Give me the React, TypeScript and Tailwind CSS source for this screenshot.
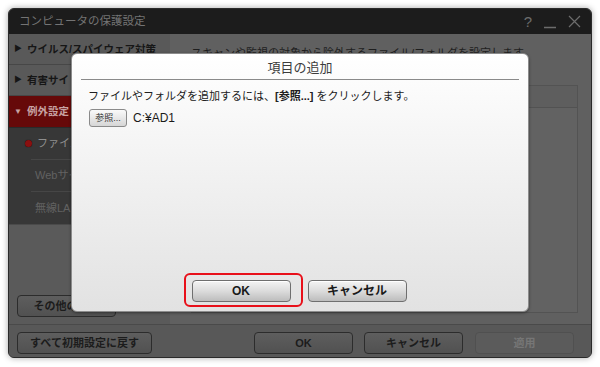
import { ReactNode } from "react";

const FONT = "font-['Liberation_Sans','Noto_Sans_CJK_JP',sans-serif]";

function DarkButton({ children, className = "", disabled = false }: { children: ReactNode; className?: string; disabled?: boolean }) {
  return (
    <div
      className={`h-[22px] flex items-center justify-center rounded-[4px] border text-[11px] font-bold leading-none ${
        disabled
          ? "border-[#505050] bg-[#5b5b5b] text-[#767676]"
          : "border-[#2c2c2c] bg-linear-to-b from-[#5e5e5e] to-[#515151] text-[#1c1c1c]"
      } ${className}`}
    >
      {children}
    </div>
  );
}

function LightButton({ children }: { children: ReactNode }) {
  return (
    <div className="w-[99px] h-[22px] flex items-center justify-center rounded-[4px] border border-[#6f6f6f] bg-linear-to-b from-[#f4f4f4] via-[#dcdcdc] to-[#bdbdbd] text-[12px] font-bold leading-none text-[#1a1a1a] shadow-[inset_0_1px_0_#ffffff]">
      {children}
    </div>
  );
}

function SideItem({ label, open = false }: { label: string; open?: boolean }) {
  return (
    <div
      className={`flex items-center gap-[5px] pl-[5px] text-[10.5px] font-bold leading-none whitespace-nowrap ${
        open ? "h-[31px] bg-[#660909] text-[#c7a2a2]" : "h-[31px] bg-[#595959] border-b border-[#474747] text-[#161616]"
      }`}
    >
      <span className="text-[8px] w-[8px]">{open ? "▼" : "▶"}</span>
      <span>{label}</span>
    </div>
  );
}

function SubItem({ label, active = false, last = false }: { label: string; active?: boolean; last?: boolean }) {
  return (
    <div className={`h-[32px] ml-[22px] flex items-center text-[11px] leading-none whitespace-nowrap ${last ? "" : "border-b border-[#464646]"}`}>
      {active ? (
        <span className="w-[7px] h-[7px] rounded-full bg-[#8a1010] -ml-[6px] mr-[5px] shadow-[0_0_1px_#000]" />
      ) : (
        <span className="w-[4px]" />
      )}
      <span className={active ? "text-[#8e8e8e]" : "text-[#626262]"}>{label}</span>
    </div>
  );
}

export default function App() {
  return (
    <div className={`relative w-[600px] h-[367px] bg-white pt-[8px] pl-[8px] ${FONT}`}>
      {/* background window (dimmed) */}
      <div className="w-[584px] h-[350px] flex flex-col rounded-[6px] overflow-hidden border border-[#2a2a2a] bg-[#5a5a5a] shadow-[0_0_6px_rgba(0,0,0,0.35)]">
        <div className="h-[25px] shrink-0 flex items-center justify-between pl-[10px] pr-[10px] bg-[#1c1c1c]">
          <span className="text-[11.5px] leading-none text-[#747474]">コンピュータの保護設定</span>
          <div className="flex items-center gap-[12px] text-[#6c6c6c]">
            <span className="text-[15px] leading-none font-['Liberation_Sans',sans-serif]">?</span>
            <svg width="12" height="14" viewBox="0 0 12 14">
              <line x1="0" y1="12.5" x2="12" y2="12.5" stroke="#6c6c6c" strokeWidth="1.3" />
            </svg>
            <svg width="13" height="13" viewBox="0 0 13 13">
              <path d="M1 1 L12 12 M12 1 L1 12" stroke="#6c6c6c" strokeWidth="1.2" />
            </svg>
          </div>
        </div>

        <div className="h-[290px] shrink-0 flex">
          <div className="w-[161px] shrink-0 flex flex-col">
            <SideItem label="ウイルス/スパイウェア対策" />
            <SideItem label="有害サイト規制" />
            <SideItem label="例外設定" open />
            <div className="bg-[#373737] border-t border-[#2a2a2a]">
              <SubItem label="ファイル/フォルダ" active />
              <SubItem label="Webサイト" />
              <SubItem label="無線LAN" last />
            </div>
            <div className="flex-1 flex items-end pl-[8px] pb-[7px] bg-[#5a5a5a] border-t border-[#4a4a4a]">
              <DarkButton className="w-[99px]">その他の設定</DarkButton>
            </div>
          </div>

          <div className="flex-1 flex flex-col pl-[21px] pr-[13px] pt-[11px] pb-[11px] bg-[#606060]">
            <div className="text-[11px] leading-[16px] text-[#1e1e1e] whitespace-nowrap">
              スキャンや監視の対象から除外するファイル/フォルダを設定します。
            </div>
            <div className="mt-[24px] flex-1 flex flex-col border border-[#535353] bg-[#626262]">
              <div className="h-[22px] border-b border-[#525252] bg-[#5e5e5e]" />
              <div className="flex-1" />
            </div>
          </div>
        </div>

        <div className="flex-1 flex items-start pt-[7px] pl-[8px] border-t border-[#4a4a4a] bg-[#585858]">
          <DarkButton className="w-[135px]">すべて初期設定に戻す</DarkButton>
          <DarkButton className="w-[99px] ml-[102px]">OK</DarkButton>
          <DarkButton className="w-[99px] ml-[11px]">キャンセル</DarkButton>
          <DarkButton className="w-[99px] ml-[12px]" disabled>
            適用
          </DarkButton>
        </div>
      </div>

      {/* modal dialog */}
      <div className="absolute left-[71px] top-[53px] w-[458px] h-[259px] flex flex-col rounded-[6px] border border-[#8c8c8c] bg-linear-to-b from-white to-[#e2e2e2] shadow-[0_1px_3px_rgba(0,0,0,0.4)]">
        <div className="h-[25px] flex items-center justify-center pt-[2px] text-[13px] leading-none text-[#3c3c3c]">項目の追加</div>
        <div className="mx-[9px] h-px bg-[#8a8a8a]" />
        <div className="mt-[8px] pl-[16px] text-[11px] leading-[16px] text-[#202020] whitespace-nowrap">
          ファイルやフォルダを追加するには、<span className="font-bold">[参照...]</span> をクリックします。
        </div>
        <div className="mt-[5px] pl-[17px] flex items-center gap-[6px]">
          <div className="w-[38px] h-[18px] flex items-center justify-center rounded-[3px] border border-[#8a8a8a] bg-linear-to-b from-[#fafafa] to-[#d6d6d6] text-[9px] leading-none text-[#333]">
            参照...
          </div>
          <span className="text-[12px] leading-none text-[#1a1a1a]">C:¥AD1</span>
        </div>
        <div className="flex-1" />
        <div className="pb-[9px] flex justify-center gap-[17px] pr-[2px]">
          <div className="relative">
            <LightButton>OK</LightButton>
            <span className="absolute -left-[8px] -top-[7px] w-[119px] h-[34px] rounded-[6px] border-2 border-[#e8101a]" />
          </div>
          <LightButton>キャンセル</LightButton>
        </div>
      </div>
    </div>
  );
}
